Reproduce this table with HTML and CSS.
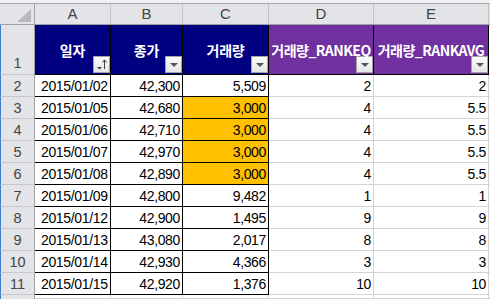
FILE: index.html
```html
<!DOCTYPE html>
<html lang="ko">
<head>
<meta charset="utf-8">
<link rel="stylesheet" href="styles.css">
</head>
<body>
<div class="topstrip"></div>
<div class="sheet">
  <!-- column header row -->
  <div class="ch corner"><svg class="corner-tri" width="14" height="13" viewBox="0 0 14 13"><polygon points="14,0 14,13 0,13" fill="#b8b9bb"/></svg></div>
  <div class="ch">A</div>
  <div class="ch">B</div>
  <div class="ch">C</div>
  <div class="ch">D</div>
  <div class="ch">E</div>
  <div class="ch end"></div>

  <!-- row 1 -->
  <div class="rh rh1">1</div>
  <div class="hd navy">일자<span class="fbtn"><svg width="15" height="15" viewBox="0 0 15 15"><polygon points="3,10 8,10 5.5,12.5" fill="#444"/><line x1="10.5" y1="3" x2="10.5" y2="12" stroke="#444" stroke-width="1"/><polyline points="8.5,5.5 10.5,2.8 12.5,5.5" fill="none" stroke="#444" stroke-width="1"/></svg></span></div>
  <div class="hd navy">종가<span class="fbtn"><i class="tri"></i></span></div>
  <div class="hd navy">거래량<span class="fbtn"><i class="tri"></i></span></div>
  <div class="hd purple"><span class="ht">거래량_RANKEQ</span><span class="fbtn"><i class="tri"></i></span></div>
  <div class="hd purple"><span class="ht">거래량_RANKAVG</span><span class="fbtn"><i class="tri"></i></span></div>
  <div class="c end"></div>

  <div class="rh">2</div><div class="c tb">2015/01/02</div><div class="c tb r">42,300</div><div class="c tb r">5,509</div><div class="c r">2</div><div class="c r">2</div><div class="c end"></div>
  <div class="rh">3</div><div class="c tb">2015/01/05</div><div class="c tb r">42,680</div><div class="c tb r gold">3,000</div><div class="c r">4</div><div class="c r">5.5</div><div class="c end"></div>
  <div class="rh">4</div><div class="c tb">2015/01/06</div><div class="c tb r">42,710</div><div class="c tb r gold">3,000</div><div class="c r">4</div><div class="c r">5.5</div><div class="c end"></div>
  <div class="rh">5</div><div class="c tb">2015/01/07</div><div class="c tb r">42,970</div><div class="c tb r gold">3,000</div><div class="c r">4</div><div class="c r">5.5</div><div class="c end"></div>
  <div class="rh">6</div><div class="c tb">2015/01/08</div><div class="c tb r">42,890</div><div class="c tb r gold">3,000</div><div class="c r">4</div><div class="c r">5.5</div><div class="c end"></div>
  <div class="rh">7</div><div class="c tb">2015/01/09</div><div class="c tb r">42,800</div><div class="c tb r">9,482</div><div class="c r">1</div><div class="c r">1</div><div class="c end"></div>
  <div class="rh">8</div><div class="c tb">2015/01/12</div><div class="c tb r">42,900</div><div class="c tb r">1,495</div><div class="c r">9</div><div class="c r">9</div><div class="c end"></div>
  <div class="rh">9</div><div class="c tb">2015/01/13</div><div class="c tb r">43,080</div><div class="c tb r">2,017</div><div class="c r">8</div><div class="c r">8</div><div class="c end"></div>
  <div class="rh">10</div><div class="c tb">2015/01/14</div><div class="c tb r">42,930</div><div class="c tb r">4,366</div><div class="c r">3</div><div class="c r">3</div><div class="c end"></div>
  <div class="rh">11</div><div class="c tb">2015/01/15</div><div class="c tb r">42,920</div><div class="c tb r">1,376</div><div class="c r">10</div><div class="c r">10</div><div class="c end"></div>

  <div class="rh last"></div><div class="c"></div><div class="c"></div><div class="c"></div><div class="c"></div><div class="c"></div><div class="c end"></div>
</div>
</body>
</html>
```

FILE: styles.css
```css
html, body {
  margin: 0;
  padding: 0;
  background: #ffffff;
  overflow: hidden;
}
body {
  width: 490px;
  height: 299px;
  font-family: "Liberation Sans", Arial, sans-serif;
}
.topstrip {
  height: 3px;
  background: #f1f2f3;
  border-bottom: 1px solid #a8a9ab;
}
.sheet {
  display: grid;
  grid-template-columns: 35px 76px 72px 86px 105px 115px 1fr;
  grid-template-rows: 21px 50px repeat(10, 22px) 4px;
}
.sheet > div {
  box-sizing: border-box;
  border-right: 1px solid #d4d4d4;
  border-bottom: 1px solid #d4d4d4;
  position: relative;
  white-space: nowrap;
}
.sheet > .ch {
  background: #e2e4e7;
  border-right: 1px solid #c2c3c5;
  border-bottom: 1px solid #9fa0a2;
  color: #444;
  font-size: 15px;
  line-height: 20px;
  text-align: center;
}
.sheet > .corner {
  border-right: 1px solid #9fa0a2;
}
.corner-tri {
  position: absolute;
  right: 3px;
  bottom: 2px;
}
.sheet > .ch.end {
  border-right: none;
}
.sheet > .rh {
  background: #e2e4e7;
  border-right: 1px solid #9fa0a2;
  border-bottom: 1px solid #c6c7c9;
  border-left: 1px solid #3d7fcf;
  color: #444;
  font-size: 14.5px;
  display: flex;
  align-items: flex-end;
  justify-content: center;
  line-height: 16px;
  padding-bottom: 2px;
}
.sheet > .rh1 {
  padding-bottom: 3px;
}
.sheet > .rh.last {
  border-bottom: none;
}
.sheet > .hd {
  color: #ffffff;
  font-family: "Noto Sans CJK KR", "Noto Sans", sans-serif;
  font-weight: bold;
  font-size: 14px;
  letter-spacing: -0.2px;
  display: flex;
  align-items: center;
  justify-content: center;
  border-right: 1px solid #000;
  border-bottom: 1px solid #000;
  overflow: visible;
}
.ht {
  letter-spacing: -0.5px;
  position: relative;
  z-index: 1;
}
.navy { background: #000080; }
.purple { background: #7030a0; }
.fbtn {
  position: absolute;
  right: 0;
  bottom: 1px;
  width: 17px;
  height: 17px;
  box-sizing: border-box;
  border: 1px solid #a3a3a3;
  background: linear-gradient(#fbfbfb, #e6e6e6);
  display: flex;
  align-items: center;
  justify-content: center;
}
.fbtn svg { display: block; }
.tri {
  display: block;
  width: 0;
  height: 0;
  border-left: 4px solid transparent;
  border-right: 4px solid transparent;
  border-top: 4px solid #555;
  margin-top: 1px;
}
.sheet > .c {
  font-size: 14px;
  letter-spacing: -0.35px;
  color: #000;
  line-height: 16px;
  display: flex;
  align-items: flex-end;
  padding: 0 2px 2px 6px;
}
.sheet > .c.r {
  justify-content: flex-end;
}
.sheet > .c.tb {
  border-right: 1px solid #000;
  border-bottom: 1px solid #000;
}
.sheet > .c.gold {
  background: #ffc000;
}
.sheet > .c.end {
  border-right: none;
}
```
